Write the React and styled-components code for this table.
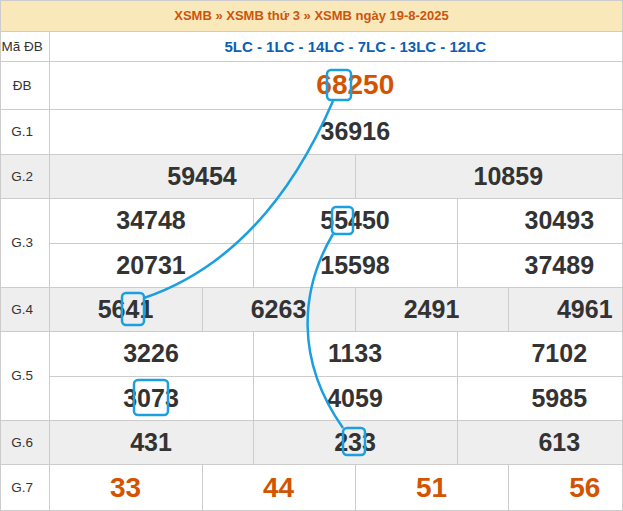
import styled, { createGlobalStyle } from 'styled-components';

const GlobalStyle = createGlobalStyle`
  body {
    margin: 0;
    background: #fff;
    font-family: 'Liberation Sans', Arial, sans-serif;
  }
`;

const Board = styled.div`
  position: relative;
  width: 623px;
  height: 511px;
  box-sizing: border-box;
  border: 1px solid #ccc;
  overflow: hidden;
  font-family: 'Liberation Sans', Arial, sans-serif;
`;

const Title = styled.div`
  height: 30px;
  line-height: 30px;
  background-color: #f8e8ba;
  border-bottom: 1px solid #ccc;
  text-align: center;
  font-size: 13px;
  font-weight: bold;
  color: #cf540c;
`;

const Table = styled.table`
  width: 660px;
  table-layout: fixed;
  border-collapse: collapse;
  border-style: hidden;
`;

const Row = styled.tr`
  height: ${({ h }) => h}px;
  background-color: ${({ shaded }) => (shaded ? '#eeeeee' : '#fff')};
`;

const Label = styled.td`
  border: 1px solid #ccc;
  padding: 0 5px 0 0;
  text-align: center;
  vertical-align: middle;
  font-size: 13.5px;
  color: #333;
  white-space: nowrap;
`;

const Cell = styled.td`
  border: 1px solid #ccc;
  padding: 0;
  text-align: center;
  vertical-align: middle;
  white-space: nowrap;
  font-weight: bold;
  font-size: ${({ big }) => (big ? 28 : 25)}px;
  color: ${({ big }) => (big ? '#d35400' : '#333')};
`;

const Codes = styled.td`
  border: 1px solid #ccc;
  padding: 0;
  text-align: center;
  vertical-align: middle;
  font-size: 15px;
  font-weight: bold;
  color: #0b5fb4;
`;

const Overlay = styled.svg`
  position: absolute;
  left: -1px;
  top: -1px;
  width: 623px;
  height: 511px;
  pointer-events: none;
`;

const rows = [
  { label: 'ĐB', h: 48, span: 12, nums: ['68250'], big: true },
  { label: 'G.1', h: 45, span: 12, nums: ['36916'] },
  { label: 'G.2', h: 44, span: 6, nums: ['59454', '10859'], shaded: true },
  { label: 'G.3', h: 45, span: 4, nums: ['34748', '55450', '30493'], rowSpan: 2 },
  { h: 44, span: 4, nums: ['20731', '15598', '37489'] },
  { label: 'G.4', h: 44, span: 3, nums: ['5641', '6263', '2491', '4961'], shaded: true },
  { label: 'G.5', h: 45, span: 4, nums: ['3226', '1133', '7102'], rowSpan: 2 },
  { h: 44, span: 4, nums: ['3073', '4059', '5985'] },
  { label: 'G.6', h: 44, span: 4, nums: ['431', '233', '613'], shaded: true },
  { label: 'G.7', h: 47, span: 3, nums: ['33', '44', '51', '56'], big: true },
];

const marks = [
  { x: 327, y: 70, w: 24, h: 30 },
  { x: 122, y: 293, w: 22, h: 32 },
  { x: 332, y: 207, w: 21, h: 27 },
  { x: 343, y: 428, w: 22, h: 27 },
  { x: 134, y: 380, w: 34, h: 35 },
];

const links = [
  'M333 101 C 292 196, 232 268, 144 298',
  'M333 234 C 300 290, 295 360, 343 428',
];

const App = () => {
  return (
    <>
      <GlobalStyle />
      <Board>
        <Title>XSMB » XSMB thứ 3 » XSMB ngày 19-8-2025</Title>
        <Table>
          <colgroup>
            <col style={{ width: 48 }} />
            {Array.from({ length: 12 }, (_, i) => (
              <col key={i} style={{ width: 51 }} />
            ))}
          </colgroup>
          <tbody>
            <Row h={29}>
              <Label>Mã ĐB</Label>
              <Codes colSpan={12}>5LC - 1LC - 14LC - 7LC - 13LC - 12LC</Codes>
            </Row>
            {rows.map((row, i) => (
              <Row key={i} h={row.h} shaded={row.shaded}>
                {row.label && <Label rowSpan={row.rowSpan}>{row.label}</Label>}
                {row.nums.map((n, j) => (
                  <Cell key={j} colSpan={row.span} big={row.big}>
                    {n}
                  </Cell>
                ))}
              </Row>
            ))}
          </tbody>
        </Table>
        <Overlay viewBox="0 0 623 511">
          <g fill="none" stroke="#1a9fe0" strokeWidth="2.5">
            {links.map((d, i) => (
              <path key={i} d={d} />
            ))}
            {marks.map((m, i) => (
              <rect key={i} x={m.x} y={m.y} width={m.w} height={m.h} rx="4" />
            ))}
          </g>
        </Overlay>
      </Board>
    </>
  );
};

export default App;
